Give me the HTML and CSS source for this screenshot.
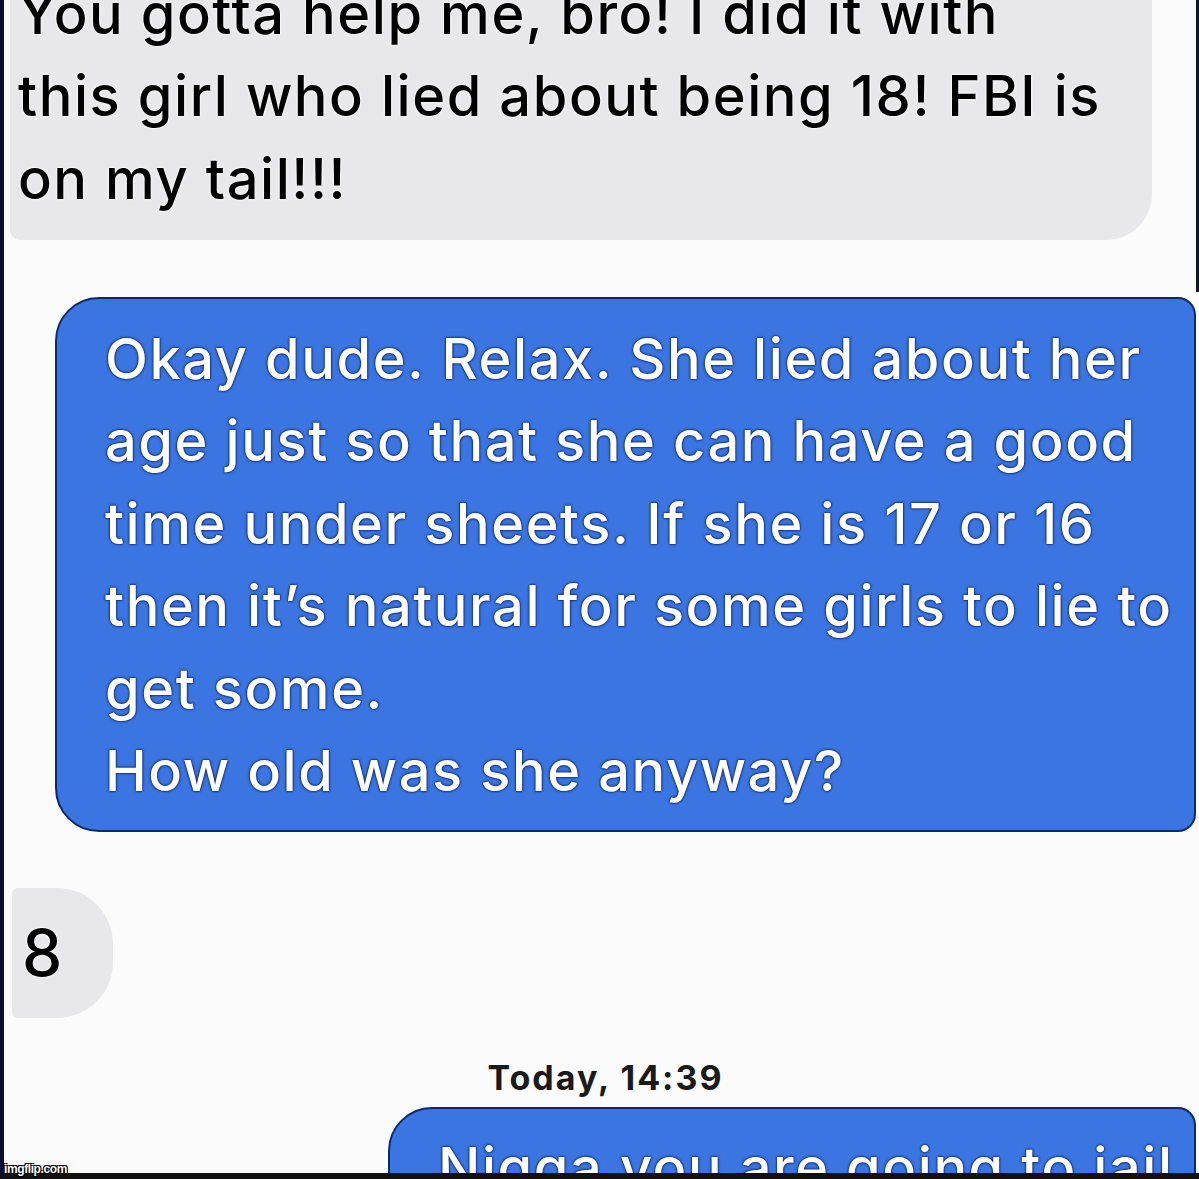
FILE: index.html
```html
<!DOCTYPE html>
<html lang="en">
  <head>
    <title>Messages</title>
    <meta charset="UTF-8" />
    <link rel="stylesheet" href="styles.css">
  </head>
  <body>
    <div class="screen">
      <div class="bubble in first">
        You gotta help me, bro! I did it with<br />
        this girl who lied about being 18! FBI is<br />
        on my tail!!!
      </div>
      <div class="bubble out reply">
        Okay dude. Relax. She lied about her<br />
        age just so that she can have a good<br />
        time under sheets. If she is 17 or 16<br />
        then it’s natural for some girls to lie to<br />
        get some.<br />
        How old was she anyway?
      </div>
      <div class="bubble in short">8</div>
      <div class="stamp">Today, 14:39</div>
      <div class="bubble out last">Nigga you are going to jail</div>
    </div>
    <div class="watermark">imgflip.com</div>
  </body>
</html>
```

FILE: styles.css
```css
* {
  box-sizing: border-box;
  margin: 0;
  padding: 0;
}
body {
  width: 1199px;
  height: 1179px;
  overflow: hidden;
  position: relative;
  background: #fbfbfb;
  font-family: Inter, "Liberation Sans", sans-serif;
}
.screen {
  height: 1179px;
  display: flex;
  flex-direction: column;
  overflow: hidden;
  border-left: 4px solid #0b0d2e;
  border-bottom: 6px solid #111;
  background: linear-gradient(#15152a, #15152a) right top / 3px 292px no-repeat;
}
.bubble {
  flex: none;
  font-size: 56px;
  font-weight: 500;
  letter-spacing: 1.55px;
  line-height: 82.4px;
  white-space: nowrap;
}
.in {
  background: #e8e8ea;
  color: #000;
  text-shadow: 0 0 3px #fff, 0 0 2px #fff;
}
.out {
  background: #3a75e1;
  color: #fff;
  border: 2px solid #0c2a6b;
  text-shadow: 0 0 2px #0b2160, 0 0 3px #0b2160, 0 0 1px #0b2160;
}
.first {
  margin: -30px 0 0 6px;
  width: 1142px;
  height: 270px;
  padding: 3px 0 0 8px;
  border-radius: 0 0 46px 10px;
}
.reply {
  margin: 57px 3px 0 51px;
  height: 535px;
  padding: 19px 0 0 48px;
  border-radius: 44px 18px 18px 44px;
}
.short {
  margin: 56px 0 0 8px;
  width: 101px;
  height: 130px;
  display: flex;
  align-items: center;
  padding-left: 10px;
  font-size: 64px;
  border-radius: 6px 56px 56px 6px;
}
.stamp {
  margin-top: 40px;
  padding-left: 8px;
  font-size: 34px;
  line-height: 40px;
  font-weight: 700;
  letter-spacing: 2px;
  color: #1a1a1a;
  text-align: center;
}
.last {
  margin: 9px 3px 0 384px;
  height: 100px;
  padding: 18px 0 0 48px;
  border-radius: 44px 18px 0 0;
  overflow: hidden;
}
.watermark {
  position: absolute;
  left: 4px;
  bottom: 3px;
  font: bold 12px "Liberation Sans", sans-serif;
  letter-spacing: -0.4px;
  color: #fff;
  text-shadow: 0 0 1px #000, 1px 1px 0 #000, -1px -1px 0 #000, 1px -1px 0 #000, -1px 1px 0 #000;
}
```
